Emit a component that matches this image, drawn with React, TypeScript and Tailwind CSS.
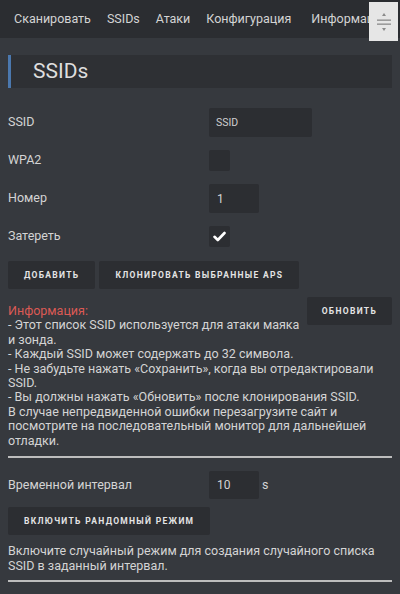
import React from "react";

const navItems = ["Сканировать", "SSIDs", "Атаки", "Конфигурация"];

const Btn: React.FC<{ label: string; className?: string }> = ({ label, className }) => (
    <button className={"h-[28px] px-4 bg-[#2c2e32] rounded-[2px] text-[8.5px] font-bold tracking-[1.3px] text-[#e4e4e4] uppercase whitespace-nowrap " + (className ?? "")}>
        {label}
    </button>
);

const ScrollHandle: React.FC = () => (
    <div className="absolute right-[2px] top-[2px] w-[29px] h-[39px] bg-[#e6e6e6] flex items-center justify-center">
        <svg width="16" height="24" viewBox="0 0 16 24">
            <path d="M8 3 L10 6 L6 6 Z" fill="#8a8a8a" />
            <rect x="1" y="9.5" width="14" height="1.3" fill="#8a8a8a" />
            <rect x="1" y="13.5" width="14" height="1.3" fill="#8a8a8a" />
            <path d="M6 18 L10 18 L8 21 Z" fill="#8a8a8a" />
        </svg>
    </div>
);

const CheckBox: React.FC<{ checked?: boolean }> = ({ checked }) => (
    <div className="w-[21px] h-[21px] bg-[#2c2e32] rounded-[2px] flex items-center justify-center">
        {checked && (
            <svg width="13" height="11" viewBox="0 0 13 11">
                <path d="M1.5 5.8 L4.8 9 L11.5 2" stroke="#ffffff" strokeWidth="2.6" fill="none" strokeLinecap="round" strokeLinejoin="round" />
            </svg>
        )}
    </div>
);

const App: React.FC = () => {
    return (
        <div className="relative w-[400px] h-[594px] overflow-hidden bg-[#36393e] text-[#d4d4d4] font-['Roboto',sans-serif]">
            {/* nav */}
            <div className="h-[38px] bg-[#2b2d31] flex items-center pl-[14px] text-[12.5px] whitespace-nowrap overflow-hidden">
                {navItems.map(item => (
                    <span key={item} className="mr-4">{item}</span>
                ))}
                <span className="ml-[4px]">Информация</span>
            </div>
            <ScrollHandle />

            {/* title */}
            <div className="mx-2 mt-[17px] h-[33px] bg-[#2e3034] border-l-[3px] border-[#4b78ae] flex items-center pl-[22px] text-[21px] text-[#dedede]">
                SSIDs
            </div>

            <div className="px-2 text-[12.5px]">
                <div className="mt-[20px] grid grid-cols-[201px_1fr] items-center gap-y-[13px]">
                    <span>SSID</span>
                    <div className="w-[103px] h-[29px] bg-[#2c2e32] rounded-[2px] flex items-center pl-[7px] text-[10.5px] text-[#cfcfcf]">SSID</div>
                    <span>WPA2</span>
                    <CheckBox />
                    <span>Номер</span>
                    <div className="w-[50px] h-[29px] bg-[#2c2e32] rounded-[2px] flex items-center pl-[8px] text-[12px]">1</div>
                    <span>Затереть</span>
                    <CheckBox checked />
                </div>

                <div className="mt-[14px] flex gap-1">
                    <Btn label="Добавить" />
                    <Btn label="Клонировать выбранные APs" />
                </div>

                <div className="mt-2 leading-[14.4px]">
                    <Btn label="Обновить" className="float-right !px-[15px]" />
                    <div className="pt-[7px]">
                        <span className="text-[#dc5a55]">Информация:</span>
                        <br />
                        - Этот список SSID используется для атаки маяка и зонда.
                        <br />
                        - Каждый SSID может содержать до 32 символа.
                        <br />
                        - Не забудьте нажать «Сохранить», когда вы отредактировали SSID.
                        <br />
                        - Вы должны нажать «Обновить» после клонирования SSID.
                        <br />
                        В случае непредвиденной ошибки перезагрузите сайт и посмотрите на последовательный монитор для дальнейшей отладки.
                    </div>
                </div>

                <div className="mt-[8px] h-[2px] bg-[#bdbdbd]" />

                <div className="mt-[13px] grid grid-cols-[201px_1fr] items-center">
                    <span>Временной интервал</span>
                    <div className="flex items-center gap-[3px]">
                        <div className="w-[50px] h-[28px] bg-[#2c2e32] rounded-[2px] flex items-center pl-[8px] text-[12px]">10</div>
                        <span>s</span>
                    </div>
                </div>

                <div className="mt-[8px]">
                    <Btn label="Включить рандомный режим" />
                </div>

                <p className="mt-[8px] leading-[15px]">
                    Включите случайный режим для создания случайного списка SSID в заданный интервал.
                </p>

                <div className="mt-[7px] h-[2px] bg-[#bdbdbd]" />
            </div>
        </div>
    );
};

export default App;
